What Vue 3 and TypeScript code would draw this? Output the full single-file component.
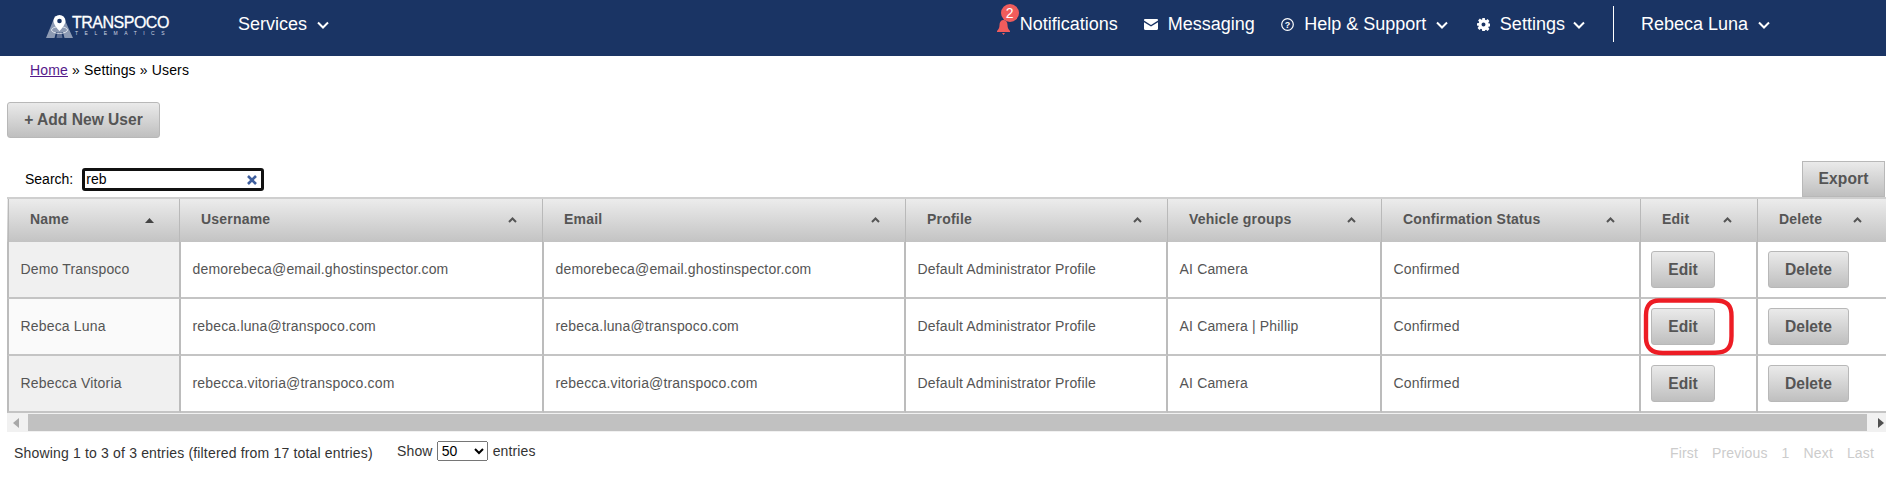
<script setup lang="ts">
interface UserRow {
  name: string
  username: string
  email: string
  profile: string
  groups: string
  status: string
  marked?: boolean
}

const columns: { label: string; sorted?: boolean }[] = [
  { label: 'Name', sorted: true },
  { label: 'Username' },
  { label: 'Email' },
  { label: 'Profile' },
  { label: 'Vehicle groups' },
  { label: 'Confirmation Status' },
  { label: 'Edit' },
  { label: 'Delete' },
]

const rows: UserRow[] = [
  {
    name: 'Demo Transpoco',
    username: 'demorebeca@email.ghostinspector.com',
    email: 'demorebeca@email.ghostinspector.com',
    profile: 'Default Administrator Profile',
    groups: 'AI Camera',
    status: 'Confirmed',
  },
  {
    name: 'Rebeca Luna',
    username: 'rebeca.luna@transpoco.com',
    email: 'rebeca.luna@transpoco.com',
    profile: 'Default Administrator Profile',
    groups: 'AI Camera | Phillip',
    status: 'Confirmed',
    marked: true,
  },
  {
    name: 'Rebecca Vitoria',
    username: 'rebecca.vitoria@transpoco.com',
    email: 'rebecca.vitoria@transpoco.com',
    profile: 'Default Administrator Profile',
    groups: 'AI Camera',
    status: 'Confirmed',
  },
]

const pages = ['First', 'Previous', '1', 'Next', 'Last']
</script>

<template>
  <div class="page">
    <header class="nav">
      <div class="logo">
        <svg class="logo-mark" width="27" height="23" viewBox="0 0 27 23">
          <path d="M9 1h8l10 22h-8.500l-1.500-6H10l-1.500 6H0z" fill="#8d9ab3" />
          <path d="M11.500 17h4l1 6h-6z" fill="#5f7094" />
          <ellipse cx="13.500" cy="15" rx="8" ry="3.400" fill="none" stroke="#dfe4ec" stroke-width="1" />
          <path d="M13.500 0a6 6 0 0 1 6 6c0 4-6 10-6 10S7.500 10 7.500 6a6 6 0 0 1 6-6z" fill="#fff" />
          <circle cx="13.500" cy="6" r="2.300" fill="#1a3464" />
        </svg>
        <div class="logo-words">
          <span class="logo-title">TRANSPOCO</span>
          <span class="logo-sub">TELEMATICS</span>
        </div>
      </div>

      <div class="nav-item services">
        <span>Services</span>
        <svg class="chev" width="12" height="8" viewBox="0 0 12 8"><path d="M1 1.500l5 5 5-5" /></svg>
      </div>

      <nav class="nav-right">
        <div class="nav-item notifications">
          <span class="bell">
            <svg width="13" height="15" viewBox="0 0 13 15">
              <path d="M6.500 0C9 0 10.500 2 10.500 5c0 3 1 4.500 2.500 6v1H0v-1c1.500-1.500 2.500-3 2.500-6 0-3 1.500-5 4-5z" fill="#f05c5c" />
              <path d="M5 13h3l-1.500 2z" fill="#f05c5c" />
            </svg>
            <span class="badge">2</span>
          </span>
          <span>Notifications</span>
        </div>
        <div class="nav-item messaging">
          <svg width="14" height="11" viewBox="0 0 14 11">
            <path d="M0 1.200C0 .5.500 0 1.200 0h11.600c.7 0 1.200.5 1.200 1.200v.4L7 6 0 1.600z" fill="#fff" />
            <path d="M0 3.200V9.800C0 10.500.500 11 1.200 11h11.600c.7 0 1.200-.5 1.200-1.200V3.200L7 7.600z" fill="#fff" />
          </svg>
          <span>Messaging</span>
        </div>
        <div class="nav-item help">
          <svg width="13" height="13" viewBox="0 0 13 13">
            <circle cx="6.500" cy="6.500" r="5.800" fill="none" stroke="#fff" stroke-width="1.200" />
            <text x="6.500" y="9.800" text-anchor="middle" class="help-mark">?</text>
          </svg>
          <span>Help &amp; Support</span>
          <svg class="chev" width="12" height="8" viewBox="0 0 12 8"><path d="M1 1.500l5 5 5-5" /></svg>
        </div>
        <div class="nav-item settings">
          <svg class="gear" width="13" height="13" viewBox="0 0 13 13">
            <path
              fill="#fff"
              fill-rule="evenodd"
              d="M5.200 0h2.600l.3 1.800 1 .4L10.600 1.100l1.800 1.800-1.100 1.500.4 1 1.800.3v2.600l-1.800.3-.4 1 1.100 1.500-1.800 1.800-1.500-1.100-1 .4L7.800 13H5.200l-.3-1.800-1-.4-1.500 1.100L.6 10.100l1.100-1.500-.4-1L0 7.800V5.200l1.800-.3.4-1L1.100 2.400 2.900.6l1.500 1.100 1-.4zM6.500 4.500a2 2 0 1 0 0 4 2 2 0 0 0 0-4z"
            />
          </svg>
          <span>Settings</span>
          <svg class="chev" width="12" height="8" viewBox="0 0 12 8"><path d="M1 1.500l5 5 5-5" /></svg>
        </div>
        <span class="nav-divider"></span>
        <div class="nav-item">
          <span>Rebeca Luna</span>
          <svg class="chev" width="12" height="8" viewBox="0 0 12 8"><path d="M1 1.500l5 5 5-5" /></svg>
        </div>
      </nav>
    </header>

    <div class="crumbs"><a class="home" href="#">Home</a> » Settings » Users</div>

    <button class="btn add" type="button">+ Add New User</button>

    <div class="toolbar">
      <label class="search">
        <span>Search:</span>
        <span class="search-box">
          <input class="search-input" type="text" value="reb" />
          <svg class="clear" width="10" height="10" viewBox="0 0 10 10">
            <path d="M1 1l8 8M9 1l-8 8" stroke="#3f5f9e" stroke-width="2.600" />
          </svg>
        </span>
      </label>
      <button class="btn export" type="button">Export</button>
    </div>

    <div class="grid-wrap">
      <div class="head-row">
        <div v-for="col in columns" :key="col.label" class="head-cell">
          <span>{{ col.label }}</span>
          <svg v-if="col.sorted" class="sort" width="9" height="5" viewBox="0 0 9 5"><path d="M4.500 0l4.500 5H0z" fill="#444" /></svg>
          <svg v-else class="sort" width="9" height="6" viewBox="0 0 9 6"><path d="M1 5l3.500-3.500L8 5" fill="none" stroke="#555" stroke-width="2" /></svg>
        </div>
      </div>

      <div v-for="(row, i) in rows" :key="row.name" class="body-row">
        <div class="cell name" :class="i % 2 ? 'name-even' : 'name-odd'">{{ row.name }}</div>
        <div class="cell">{{ row.username }}</div>
        <div class="cell">{{ row.email }}</div>
        <div class="cell">{{ row.profile }}</div>
        <div class="cell">{{ row.groups }}</div>
        <div class="cell">{{ row.status }}</div>
        <div class="cell action">
          <button class="btn row-btn" type="button">Edit</button>
          <svg v-if="row.marked" class="mark" width="92" height="58" viewBox="0 0 92 58">
            <path
              d="M16 2.500H72C84 2.500 88.500 7 88.500 18V38C88.500 50 84 54.500 72 54.800L20 55C9 55 3 50 3 40V17C3 8 7 2.500 16 2.500Z"
              fill="none"
              stroke="#ed1c24"
              stroke-width="4.400"
            />
          </svg>
        </div>
        <div class="cell action last">
          <button class="btn row-btn" type="button">Delete</button>
        </div>
      </div>

      <div class="scrollbar">
        <svg width="7" height="10" viewBox="0 0 7 10"><path d="M6 0v10L0 5z" fill="#a8a8a8" /></svg>
        <div class="thumb"></div>
        <svg width="7" height="10" viewBox="0 0 7 10"><path d="M0 0v10l6-5z" fill="#505050" /></svg>
      </div>
    </div>

    <footer class="foot">
      <span class="info">Showing 1 to 3 of 3 entries (filtered from 17 total entries)</span>
      <label class="length">
        Show
        <select class="length-select">
          <option>50</option>
        </select>
        entries
      </label>
      <div class="pager">
        <span v-for="p in pages" :key="p">{{ p }}</span>
      </div>
    </footer>
  </div>
</template>

<style scoped>
.page {
  width: 1886px;
  height: 494px;
  overflow: hidden;
  background: #fff;
  font-family: "Liberation Sans", Arial, sans-serif;
  font-size: 14px;
  color: #000;
}

/* top bar */
.nav {
  display: flex;
  align-items: center;
  height: 56px;
  padding: 0 116px 8px 46px;
  box-sizing: border-box;
  background: #1a3464;
  color: #fff;
  font-size: 18px;
}
.logo {
  display: flex;
  align-items: flex-start;
  width: 122px;
  margin-top: 5px;
}
.logo-mark {
  flex: none;
}
.logo-words {
  display: flex;
  flex-direction: column;
  margin-left: -1px;
}
.logo-title {
  font-size: 16px;
  line-height: 16px;
  letter-spacing: -0.5px;
  -webkit-text-stroke: 0.3px #fff;
  white-space: nowrap;
}
.logo-sub {
  margin: -1px 0 0 3px;
  font-size: 5px;
  line-height: 6px;
  letter-spacing: 6.500px;
  white-space: nowrap;
  color: #cfd6e3;
}
.nav-item {
  display: flex;
  align-items: center;
  gap: 10px;
  white-space: nowrap;
}
.services {
  margin-left: 70px;
}
.nav-right {
  display: flex;
  align-items: center;
  margin-left: auto;
}
.notifications {
  margin-right: 26px;
}
.messaging {
  margin-right: 26.500px;
}
.help {
  margin-right: 28.500px;
}
.settings {
  gap: 8px;
  margin-right: 28px;
}
.gear {
  margin-right: 2px;
}
.nav-divider {
  width: 1px;
  height: 36px;
  margin-right: 27px;
  background: #fff;
}
.chev {
  flex: none;
  margin-top: 2px;
}
.chev path {
  fill: none;
  stroke: #fff;
  stroke-width: 2;
}
.help-mark {
  font-size: 9px;
  font-weight: 700;
  fill: #fff;
}
.bell {
  position: relative;
  display: flex;
  margin-top: 7px;
}
.badge {
  position: absolute;
  left: 4px;
  top: -16px;
  width: 18px;
  height: 18px;
  border-radius: 50%;
  background: #f05c5c;
  color: #fff;
  font-size: 14px;
  line-height: 18px;
  text-align: center;
}

/* breadcrumb */
.crumbs {
  padding: 6px 0 0 30px;
  line-height: 16px;
  letter-spacing: 0.15px;
}
.home {
  color: #551a8b;
}

/* buttons */
.btn {
  display: block;
  box-sizing: border-box;
  padding: 0;
  border: 1px solid #b8b8b8;
  border-radius: 3px;
  background: linear-gradient(#eaeaea, #bfbfbf);
  color: #555;
  font-family: inherit;
  font-size: 15.600px;
  font-weight: 700;
}
.add {
  width: 153px;
  height: 36px;
  margin: 24px 0 0 7px;
}
.export {
  width: 83px;
  height: 36px;
  border-radius: 0;
  margin-right: 1px;
  letter-spacing: 0.1px;
}
.row-btn {
  height: 37px;
  width: 64px;
}
.last .row-btn {
  width: 81px;
}

/* search row */
.toolbar {
  display: flex;
  align-items: center;
  justify-content: space-between;
  margin-top: 23px;
  padding-left: 25px;
}
.search {
  display: flex;
  align-items: center;
  gap: 9px;
}
.search-box {
  position: relative;
  display: block;
}
.search-input {
  display: block;
  width: 182px;
  height: 23px;
  box-sizing: border-box;
  padding: 0 2px 0 1px;
  border: 3px solid #111;
  border-radius: 3px;
  outline: none;
  font-family: inherit;
  font-size: 14px;
  color: #000;
}
.clear {
  position: absolute;
  right: 7px;
  top: 7px;
}

/* table */
.grid-wrap {
  margin-left: 7px;
  border-top: 2px solid #cfcfcf;
  overflow: hidden;
}
.head-row,
.body-row {
  display: grid;
  width: 1900px;
}
.head-row {
  grid-template-columns: 172px 363px 363px 262px 214px 259px 117px 130px;
  height: 43px;
  padding-left: 1px;
  background: linear-gradient(#ececec, #c3c3c3);
}
.head-cell {
  display: flex;
  align-items: center;
  justify-content: space-between;
  box-sizing: border-box;
  padding: 0 25px 3px 21px;
  border-right: 1px solid #b9b9b9;
  color: #555;
  font-weight: 700;
  letter-spacing: 0.2px;
  white-space: nowrap;
}
.head-cell:first-child {
  border-left: 1px solid #b9b9b9;
}
.sort {
  flex: none;
  margin-top: 2px;
}
.body-row {
  grid-template-columns: 174px 363px 362px 262px 214px 259px 117px 130px;
  height: 57px;
}
.cell {
  display: flex;
  align-items: center;
  box-sizing: border-box;
  padding: 0 0 1px 11.500px;
  border-right: 2px solid #bcbcbc;
  border-bottom: 2px solid #c4c4c4;
  color: #555;
  letter-spacing: 0.17px;
  white-space: nowrap;
}
.name {
  border-left: 2px solid #bcbcbc;
}
.name-odd {
  background: #f0f0f0;
}
.name-even {
  background: #fafafa;
}
.action {
  position: relative;
  padding: 0 0 0 10px;
}
.mark {
  position: absolute;
  left: 2px;
  top: -1px;
}

/* horizontal scrollbar */
.scrollbar {
  display: flex;
  align-items: center;
  height: 19px;
  padding: 0 1px 0 6px;
  background: #f1f1f1;
}
.thumb {
  flex: 1;
  height: 17px;
  margin: 0 11px 0 8px;
  background: #c1c1c1;
}

/* footer */
.foot {
  display: flex;
  align-items: center;
  margin-top: 10px;
  padding: 0 12px 0 14px;
  height: 20px;
  color: #333;
}
.info {
  width: 383px;
  margin-top: 2px;
  letter-spacing: 0.17px;
  white-space: nowrap;
}
.length {
  display: flex;
  align-items: center;
  gap: 4px;
  margin-top: -3px;
  letter-spacing: 0.15px;
}
.length-select {
  width: 51px;
  height: 20px;
  margin-right: 1px;
  padding: 0;
  font-family: inherit;
  font-size: 14px;
}
.pager {
  display: flex;
  gap: 14px;
  margin-left: auto;
  margin-top: 2px;
  letter-spacing: 0.15px;
  color: #ccc;
}
</style>

<style>
html,
body {
  margin: 0;
  background: #fff;
}
</style>
